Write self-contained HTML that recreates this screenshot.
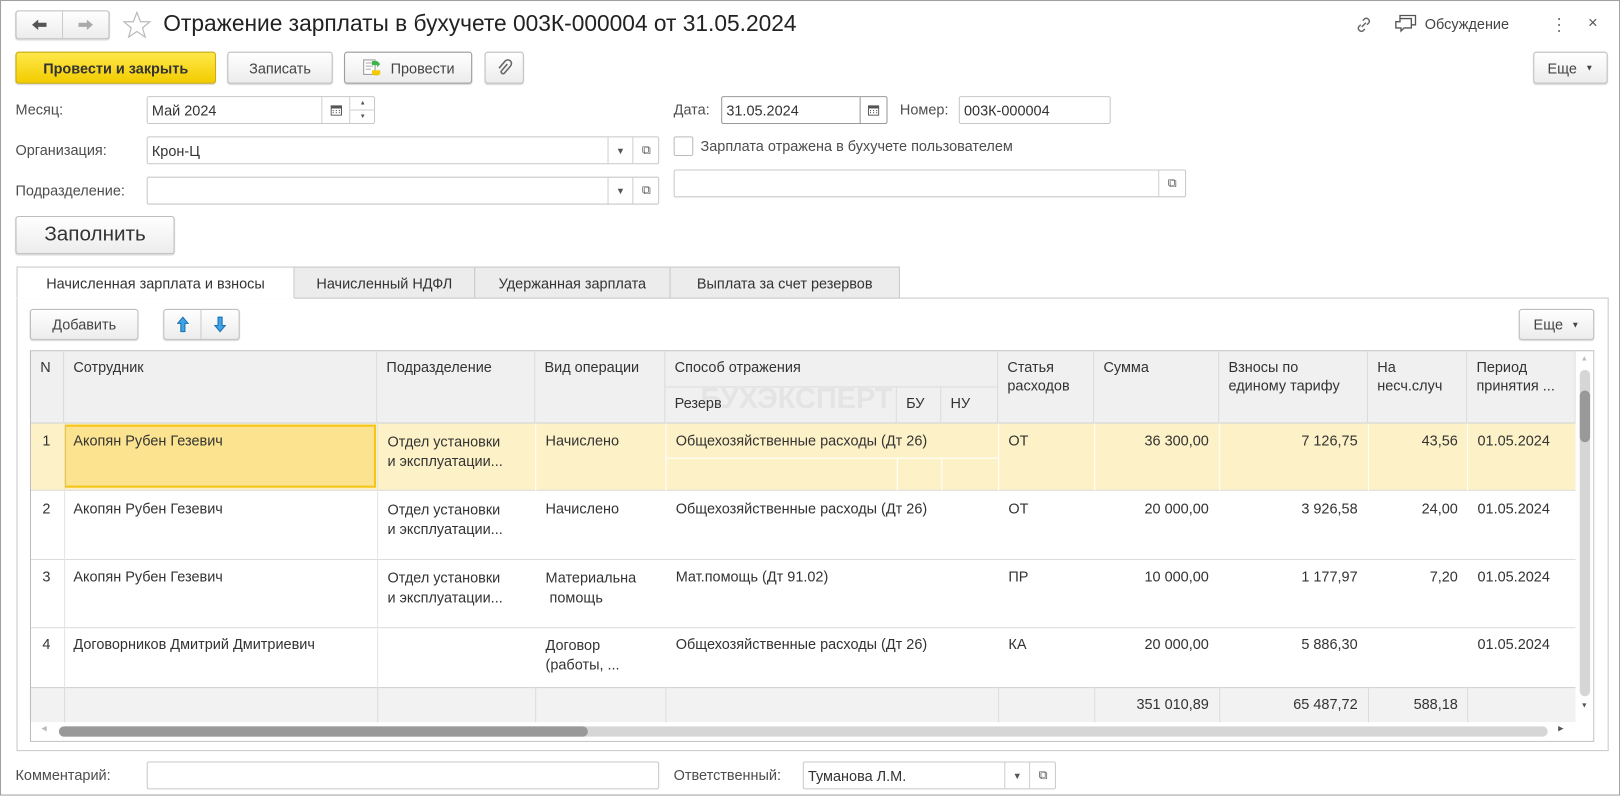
<!DOCTYPE html>
<html><head><meta charset="utf-8">
<style>
*{box-sizing:border-box;margin:0;padding:0}
html,body{width:1620px;height:796px;overflow:hidden;background:#fff}
#w{position:absolute;left:0;top:0;width:1568px;height:770px;transform:scale(1.0332);transform-origin:0 0;font-family:"Liberation Sans",sans-serif;font-size:14px;color:#333;border:1px solid #a0a0a0}
.a{position:absolute;white-space:nowrap}
.btn{position:absolute;border:1px solid #bdbdbd;border-radius:3px;background:linear-gradient(#fff,#ececec);box-shadow:0 1px 1px rgba(0,0,0,.15);display:flex;align-items:center;justify-content:center;color:#444}
.inp{position:absolute;border:1px solid #c8c8c8;border-radius:2px;background:#fff;padding-left:4px;display:flex;align-items:center;color:#333}
.lbl{position:absolute;color:#4d4d4d;white-space:nowrap}
.sb{position:absolute;top:0;bottom:0;border-left:1px solid #d0d0d0;display:flex;align-items:center;justify-content:center;font-size:9px;color:#555}
.tab{position:absolute;top:257px;height:31px;border:1px solid #c8c8c8;background:#ececec;display:flex;align-items:center;justify-content:center;color:#333}
.c{position:absolute;border-right:1px solid #dcdcdc;padding:6px 9px;line-height:18px;white-space:nowrap;overflow:hidden}
.r{text-align:right}
</style></head><body><div id="w">
<div class="btn" style="left:14px;top:9px;width:91px;height:28px;justify-content:flex-start">
<span style="width:45px;height:26px;border-right:1px solid #ccc;display:flex;align-items:center;justify-content:center"><svg width="16" height="12" viewBox="0 0 16 12"><path d="M1 6l6-5v3h8v4H7v3z" fill="#555"/></svg></span><span style="width:45px;height:26px;display:flex;align-items:center;justify-content:center"><svg width="16" height="12" viewBox="0 0 16 12"><path d="M15 6l-6-5v3H1v4h8v3z" fill="#aaa"/></svg></span></div>
<svg class="a" style="left:117px;top:9px" width="29" height="28" viewBox="0 0 29 28"><polygon points="14.5,2 18,11 27,11 20,17 22.5,26 14.5,20.5 6.5,26 9,17 2,11 11,11" fill="none" stroke="#bbb" stroke-width="1.2"/></svg>
<div class="a" style="left:157px;top:9px;font-size:22px;color:#222">Отражение зарплаты в бухучете 003К-000004 от 31.05.2024</div>
<svg class="a" style="left:1309px;top:13px" width="20" height="20" viewBox="0 0 20 20" fill="none" stroke="#666" stroke-width="1.4"><path d="M8 12l4-4M9 6l2-2a3 3 0 014 4l-2 2M11 14l-2 2a3 3 0 01-4-4l2-2"/></svg>
<svg class="a" style="left:1349px;top:13px" width="22" height="20" viewBox="0 0 22 20" fill="none" stroke="#555" stroke-width="1.3"><path d="M5 4h11v9H9l-3 3v-3H1V7h4zM5 4V1h15v9h-4"/></svg>
<div class="a" style="left:1378px;top:14px;color:#444">Обсуждение</div>
<div class="a" style="left:1505px;top:13px;width:4px;font-size:18px;line-height:6px;color:#777">·<br>·<br>·</div>
<div class="a" style="left:1536px;top:13px;color:#555;font-size:16px">×</div>
<div class="btn" style="left:14px;top:49px;width:194px;height:31px;background:linear-gradient(#ffe84a,#f2cc00);border-color:#c9a800;color:#333;font-weight:bold">Провести и закрыть</div>
<div class="btn" style="left:219px;top:49px;width:102px;height:31px">Записать</div>
<div class="btn" style="left:332px;top:49px;width:124px;height:31px;border-color:#999"><svg width="20" height="20" viewBox="0 0 20 20" style="margin-right:8px"><rect x="2" y="2" width="11" height="14" fill="#fff" stroke="#999"/><path d="M4 5h7M4 8h7M4 11h5" stroke="#aaa"/><path d="M10 3h5l3 3-3 3v-2h-5z" fill="#3cb54a"/><ellipse cx="14" cy="15" rx="4" ry="2" fill="#e8b800"/><rect x="10" y="12" width="8" height="4" fill="#f2cc00"/></svg>Провести</div>
<div class="btn" style="left:468px;top:49px;width:38px;height:31px"><svg width="16" height="18" viewBox="0 0 16 18" fill="none" stroke="#666" stroke-width="1.5"><path d="M11 5l-6 7a2 2 0 003 2l6-7a3.5 3.5 0 00-5-5L3 9"/></svg></div>
<div class="btn" style="left:1483px;top:49px;width:72px;height:31px">Еще <span style="font-size:8px;margin-left:8px">▼</span></div>
<div class="lbl" style="left:14px;top:97px">Месяц:</div>
<div class="inp" style="left:141px;top:92px;width:221px;height:27px">Май 2024
<div class="sb" style="left:168px;width:27px"><svg width="11" height="11" viewBox="0 0 11 11"><rect x="0.5" y="1.5" width="10" height="9" fill="none" stroke="#555"/><rect x="0.5" y="1.5" width="10" height="2.5" fill="#555"/><path d="M2 6h1M5 6h1M8 6h1M2 8h1M5 8h1M8 8h1" stroke="#555"/></svg></div>
<div class="sb" style="left:195px;width:25px;flex-direction:column;font-size:6px"><span style="border-bottom:1px solid #d0d0d0;width:100%;text-align:center;height:13px;line-height:13px">▲</span><span style="height:13px;line-height:13px">▼</span></div></div>
<div class="lbl" style="left:651px;top:97px">Дата:</div>
<div class="inp" style="left:697px;top:92px;width:161px;height:27px;border-color:#999">31.05.2024
<div class="sb" style="left:133px;width:26px;border-color:#999"><svg width="11" height="11" viewBox="0 0 11 11"><rect x="0.5" y="1.5" width="10" height="9" fill="none" stroke="#555"/><rect x="0.5" y="1.5" width="10" height="2.5" fill="#555"/><path d="M2 6h1M5 6h1M8 6h1M2 8h1M5 8h1M8 8h1" stroke="#555"/></svg></div></div>
<div class="lbl" style="left:870px;top:97px">Номер:</div>
<div class="inp" style="left:927px;top:92px;width:147px;height:27px">003К-000004</div>
<div class="lbl" style="left:14px;top:136px">Организация:</div>
<div class="inp" style="left:141px;top:131px;width:496px;height:27px">Крон-Ц
<div class="sb" style="left:445px;width:24px">▼</div><div class="sb" style="left:469px;width:26px;font-size:12px">⧉</div></div>
<div class="a" style="left:651px;top:131px;width:19px;height:19px;border:1px solid #bbb;border-radius:2px;background:#fff"></div>
<div class="lbl" style="left:677px;top:132px">Зарплата отражена в бухучете пользователем</div>
<div class="lbl" style="left:14px;top:175px">Подразделение:</div>
<div class="inp" style="left:141px;top:170px;width:496px;height:27px">
<div class="sb" style="left:445px;width:24px">▼</div><div class="sb" style="left:469px;width:26px;font-size:12px">⧉</div></div>
<div class="inp" style="left:651px;top:163px;width:496px;height:27px"><div class="sb" style="left:468px;width:26px;font-size:12px">⧉</div></div>
<div class="btn" style="left:14px;top:208px;width:154px;height:37px;font-size:20px;color:#333">Заполнить</div>
<div class="a" style="left:15px;top:287px;width:1541px;height:439px;border:1px solid #c8c8c8"></div>
<div class="tab" style="left:15px;width:269px;background:#fff;border-bottom-color:#fff;z-index:2">Начисленная зарплата и взносы</div>
<div class="tab" style="left:283px;width:176px">Начисленный НДФЛ</div>
<div class="tab" style="left:458px;width:190px">Удержанная зарплата</div>
<div class="tab" style="left:647px;width:223px">Выплата за счет резервов</div>
<div class="btn" style="left:28px;top:298px;width:105px;height:30px">Добавить</div>
<div class="btn" style="left:157px;top:298px;width:74px;height:30px;justify-content:flex-start">
<span style="width:36px;border-right:1px solid #ccc;text-align:center;height:28px;display:flex;align-items:center;justify-content:center"><svg width="12" height="16" viewBox="0 0 12 16"><path d="M6 1L11 7H8v8H4V7H1z" fill="#3ea3e8" stroke="#1a6fb0"/></svg></span>
<span style="width:36px;text-align:center;display:flex;align-items:center;justify-content:center"><svg width="12" height="16" viewBox="0 0 12 16"><path d="M6 15L11 9H8V1H4v8H1z" fill="#3ea3e8" stroke="#1a6fb0"/></svg></span></div>
<div class="btn" style="left:1469px;top:298px;width:73px;height:30px">Еще <span style="font-size:8px;margin-left:8px">▼</span></div>
<div class="a" style="left:28px;top:338px;width:1514px;height:379px;border:1px solid #bdbdbd;overflow:hidden;background:#fff">
<div class="a" style="left:0;top:0;width:1495px;height:70px;background:#f0f0f0;border-bottom:1px solid #d0d0d0"></div>
<div class="c" style="left:0;top:0;width:32px;height:70px">N</div>
<div class="c" style="left:32px;top:0;width:303px;height:70px">Сотрудник</div>
<div class="c" style="left:335px;top:0;width:153px;height:70px">Подразделение</div>
<div class="c" style="left:488px;top:0;width:126px;height:70px">Вид операции</div>
<div class="c" style="left:614px;top:0;width:322px;height:35px;border-bottom:1px solid #dcdcdc">Способ отражения</div>
<div class="c" style="left:614px;top:35px;width:224px;height:35px">Резерв</div>
<div class="c" style="left:838px;top:35px;width:43px;height:35px">БУ</div>
<div class="c" style="left:881px;top:35px;width:55px;height:35px">НУ</div>
<div class="a" style="left:648px;top:30px;font-size:28px;font-weight:bold;color:rgba(150,150,150,.13)">БУХЭКСПЕРТ</div>
<div class="c" style="left:936px;top:0;width:93px;height:70px;white-space:normal">Статья расходов</div>
<div class="c" style="left:1029px;top:0;width:121px;height:70px">Сумма</div>
<div class="c" style="left:1150px;top:0;width:144px;height:70px">Взносы по<br>единому тарифу</div>
<div class="c" style="left:1294px;top:0;width:96px;height:70px">На<br>несч.случ</div>
<div class="c" style="left:1390px;top:0;width:105px;height:70px">Период<br>принятия ...</div>
<div class="a" style="left:0;top:70px;width:1495px;height:65px;background:#fdf2c7;border-bottom:1px solid #ddd"></div>
<div class="a" style="left:32px;top:71px;width:302px;height:61px;background:#fbe38f;border:2px solid #f5c518"></div>
<div class="a" style="left:614px;top:103px;width:322px;height:1px;background:#fff"></div>
<div class="a" style="left:0;top:201px;width:1495px;height:1px;background:#ddd"></div>
<div class="a" style="left:0;top:267px;width:1495px;height:1px;background:#ddd"></div>
<div class="a" style="left:0;top:325px;width:1495px;height:34px;background:#f2f2f2;border-top:1px solid #d0d0d0"></div>
<div class="a" style="left:0;top:70px;width:1495px;height:290px">
<div class="a" style="left:32px;top:0;width:1px;height:290px;background:#e4e4e4"></div>
<div class="a" style="left:335px;top:0;width:1px;height:290px;background:#e4e4e4"></div>
<div class="a" style="left:488px;top:0;width:1px;height:65px;background:#fff"></div>
<div class="a" style="left:614px;top:0;width:1px;height:65px;background:#fff"></div>
<div class="a" style="left:838px;top:33px;width:1px;height:32px;background:#fff"></div>
<div class="a" style="left:881px;top:33px;width:1px;height:32px;background:#fff"></div>
<div class="a" style="left:936px;top:0;width:1px;height:65px;background:#fff"></div>
<div class="a" style="left:1029px;top:0;width:1px;height:65px;background:#fff"></div>
<div class="a" style="left:1150px;top:0;width:1px;height:65px;background:#fff"></div>
<div class="a" style="left:1294px;top:0;width:1px;height:65px;background:#fff"></div>
<div class="a" style="left:1390px;top:0;width:1px;height:65px;background:#fff"></div>
<div class="a" style="left:0;top:255px;width:1495px;height:35px">
<div class="a" style="left:32px;top:0;width:1px;height:35px;background:#ddd"></div>
<div class="a" style="left:335px;top:0;width:1px;height:35px;background:#ddd"></div>
<div class="a" style="left:488px;top:0;width:1px;height:35px;background:#ddd"></div>
<div class="a" style="left:614px;top:0;width:1px;height:35px;background:#ddd"></div>
<div class="a" style="left:936px;top:0;width:1px;height:35px;background:#ddd"></div>
<div class="a" style="left:1029px;top:0;width:1px;height:35px;background:#ddd"></div>
<div class="a" style="left:1150px;top:0;width:1px;height:35px;background:#ddd"></div>
<div class="a" style="left:1294px;top:0;width:1px;height:35px;background:#ddd"></div>
<div class="a" style="left:1390px;top:0;width:1px;height:35px;background:#ddd"></div>
</div>
</div>
<div class="a" style="left:11px;top:78px">1</div>
<div class="a" style="left:41px;top:78px">Акопян Рубен Гезевич</div>
<div class="a" style="left:345px;top:78px;line-height:19px">Отдел установки<br>и эксплуатации...</div>
<div class="a" style="left:498px;top:78px">Начислено</div>
<div class="a" style="left:624px;top:78px">Общехозяйственные расходы (Дт 26)</div>
<div class="a" style="left:946px;top:78px">ОТ</div>
<div class="a r" style="left:1029px;top:78px;width:111px">36 300,00</div>
<div class="a r" style="left:1150px;top:78px;width:134px">7 126,75</div>
<div class="a r" style="left:1294px;top:78px;width:87px">43,56</div>
<div class="a" style="left:1400px;top:78px">01.05.2024</div>
<div class="a" style="left:11px;top:144px">2</div>
<div class="a" style="left:41px;top:144px">Акопян Рубен Гезевич</div>
<div class="a" style="left:345px;top:144px;line-height:19px">Отдел установки<br>и эксплуатации...</div>
<div class="a" style="left:498px;top:144px">Начислено</div>
<div class="a" style="left:624px;top:144px">Общехозяйственные расходы (Дт 26)</div>
<div class="a" style="left:946px;top:144px">ОТ</div>
<div class="a r" style="left:1029px;top:144px;width:111px">20 000,00</div>
<div class="a r" style="left:1150px;top:144px;width:134px">3 926,58</div>
<div class="a r" style="left:1294px;top:144px;width:87px">24,00</div>
<div class="a" style="left:1400px;top:144px">01.05.2024</div>
<div class="a" style="left:11px;top:210px">3</div>
<div class="a" style="left:41px;top:210px">Акопян Рубен Гезевич</div>
<div class="a" style="left:345px;top:210px;line-height:19px">Отдел установки<br>и эксплуатации...</div>
<div class="a" style="left:498px;top:210px;line-height:19px">Материальна<br>&nbsp;помощь</div>
<div class="a" style="left:624px;top:210px">Мат.помощь (Дт 91.02)</div>
<div class="a" style="left:946px;top:210px">ПР</div>
<div class="a r" style="left:1029px;top:210px;width:111px">10 000,00</div>
<div class="a r" style="left:1150px;top:210px;width:134px">1 177,97</div>
<div class="a r" style="left:1294px;top:210px;width:87px">7,20</div>
<div class="a" style="left:1400px;top:210px">01.05.2024</div>
<div class="a" style="left:11px;top:275px">4</div>
<div class="a" style="left:41px;top:275px">Договорников Дмитрий Дмитриевич</div>
<div class="a" style="left:498px;top:275px;line-height:19px">Договор<br>(работы, ...</div>
<div class="a" style="left:624px;top:275px">Общехозяйственные расходы (Дт 26)</div>
<div class="a" style="left:946px;top:275px">КА</div>
<div class="a r" style="left:1029px;top:275px;width:111px">20 000,00</div>
<div class="a r" style="left:1150px;top:275px;width:134px">5 886,30</div>
<div class="a" style="left:1400px;top:275px">01.05.2024</div>
<div class="a r" style="left:1029px;top:333px;width:111px">351 010,89</div>
<div class="a r" style="left:1150px;top:333px;width:134px">65 487,72</div>
<div class="a r" style="left:1294px;top:333px;width:87px">588,18</div>
<div class="a" style="left:1495px;top:0;width:18px;height:360px;background:#fff"></div>
<div class="a" style="left:1499px;top:18px;width:10px;height:316px;background:#d6d6d6;border-radius:5px"></div>
<div class="a" style="left:1499px;top:38px;width:10px;height:50px;background:#999;border-radius:5px"></div>
<div class="a" style="left:1500px;top:4px;font-size:7px;color:#bbb">▲</div>
<div class="a" style="left:1500px;top:340px;font-size:7px;color:#555">▼</div>
<div class="a" style="left:0;top:359px;width:1513px;height:19px;background:#fff"></div>
<div class="a" style="left:27px;top:363px;width:1441px;height:10px;background:#d6d6d6;border-radius:5px"></div>
<div class="a" style="left:27px;top:363px;width:512px;height:10px;background:#999;border-radius:5px"></div>
<div class="a" style="left:10px;top:361px;font-size:7px;color:#bbb">◀</div>
<div class="a" style="left:1478px;top:361px;font-size:7px;color:#555">▶</div>
</div>
<div class="lbl" style="left:14px;top:741px">Комментарий:</div>
<div class="inp" style="left:141px;top:736px;width:496px;height:27px"></div>
<div class="lbl" style="left:651px;top:741px">Ответственный:</div>
<div class="inp" style="left:776px;top:736px;width:245px;height:27px">Туманова Л.М.
<div class="sb" style="left:194px;width:24px">▼</div><div class="sb" style="left:218px;width:26px;font-size:12px">⧉</div></div>
</div></body></html>
